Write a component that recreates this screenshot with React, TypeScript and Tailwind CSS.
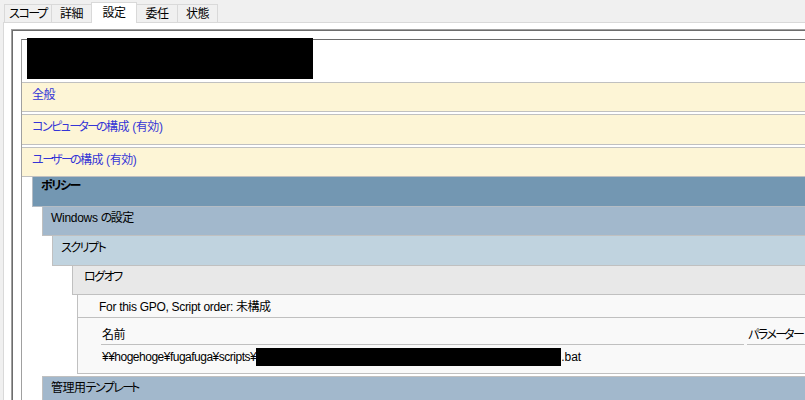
import React from "react";

const FONT = "font-['Liberation_Sans','Noto_Sans_CJK_JP',sans-serif] [font-feature-settings:'palt']";

function J({ t }: { t: string }) {
  const parts: { s: string; k: "dash" | "kana" | "kanji" | "latin" }[] = [];
  for (const ch of t) {
    let k: "dash" | "kana" | "kanji" | "latin";
    if (ch === "ー") k = "dash";
    else if (/[\u3040-\u30ff]/.test(ch)) k = "kana";
    else if (/[\u4e00-\u9fff]/.test(ch)) k = "kanji";
    else k = "latin";
    const last = parts[parts.length - 1];
    if (last && last.k === k) last.s += ch;
    else parts.push({ s: ch, k });
  }
  return (
    <>
      {parts.map((p, i) => {
        if (p.k === "dash")
          return (
            <span key={i} className="tracking-[-3px]">
              {p.s}
            </span>
          );
        if (p.k === "kana")
          return (
            <span key={i} className="tracking-[-1.5px]">
              {p.s}
            </span>
          );
        if (p.k === "kanji")
          return (
            <span key={i} className="tracking-[-0.5px]">
              {p.s}
            </span>
          );
        return (
          <span key={i} className="tracking-[-0.3px]">
            {p.s}
          </span>
        );
      })}
    </>
  );
}

function Tab({ label, w, selected }: { label: string; w: string; selected?: boolean }) {
  if (selected) {
    return (
      <div
        className={`${w} h-[21px] -mb-px relative z-10 bg-white border border-b-0 border-[#d9d9d9] flex items-start justify-center pt-[2px] leading-[16px] whitespace-nowrap`}
      >
        <J t={label} />
      </div>
    );
  }
  return (
    <div
      className={`${w} h-[18px] -ml-px bg-[#f0f0f0] border border-b-0 border-[#d9d9d9] flex items-start justify-center pt-[1px] leading-[16px] whitespace-nowrap`}
    >
      <J t={label} />
    </div>
  );
}

function Cream({ label, h, mt }: { label: string; h: string; mt?: string }) {
  return (
    <div
      className={`${h} ${mt ?? ""} border-y border-[#c0c0c0] bg-[#fdf5d6] pl-[10px] pt-[4px] leading-[16px] text-[#3535d6] whitespace-nowrap`}
    >
      <J t={label} />
    </div>
  );
}

export default function App() {
  return (
    <div className={`w-[805px] h-[400px] overflow-hidden bg-[#f0f0f0] text-[12px] text-black ${FONT}`}>
      {/* tabs */}
      <div className="flex items-end h-[22px] pl-[5px]">
        <Tab label="スコープ" w="w-[48px]" />
        <Tab label="詳細" w="w-[41px]" />
        <div className="-ml-px">
          <Tab label="設定" w="w-[46px]" selected />
        </div>
        <Tab label="委任" w="w-[42px]" />
        <Tab label="状態" w="w-[41px]" />
      </div>

      {/* panel */}
      <div className="ml-[3px] h-[378px] bg-white border-l border-t border-[#d9d9d9] pl-[7px] pt-[6px]">
        <div className="h-full border-l border-t border-[#a0a0a0]">
          <div className="h-full border-l border-t border-[#6d6d6d] pl-[8px] pt-[8px]">
            <div className="h-full border-l border-[#a0a0a0] border-t border-t-[#6b6b6b]">
              {/* header with redacted title */}
              <div className="flex h-[42px] bg-white">
                <div className="ml-[5px] -mt-[2px] w-[286px] h-[41px] bg-black" />
              </div>

              <Cream label="全般" h="h-[30px]" />
              <Cream label="コンピューターの構成 (有効)" h="h-[31px]" mt="mt-[2px]" />
              <Cream label="ユーザーの構成 (有効)" h="h-[30px]" mt="mt-[2px]" />

              {/* policy */}
              <div className="ml-[10px]">
                <div className="h-[30px] bg-[#7397b2] border-l border-b border-[#b4bcc4] pl-[8px] pt-[1px] leading-[16px] font-bold whitespace-nowrap">
                  <J t="ポリシー" />
                </div>
                <div className="ml-[10px]">
                  <div className="h-[29px] bg-[#a2b8cc] border-l border-b border-[#c0c0c0] pl-[8px] pt-[3px] leading-[16px] whitespace-nowrap">
                    <J t="Windows の設定" />
                  </div>
                  <div className="ml-[10px]">
                    <div className="h-[30px] bg-[#c0d3df] border-l border-b border-[#c0c0c0] pl-[8px] pt-[4px] leading-[16px] whitespace-nowrap">
                      <J t="スクリプト" />
                    </div>
                    <div className="ml-[20px]">
                      <div className="h-[29px] bg-[#e8e8e8] border-l border-b border-[#c0c0c0] pl-[11px] pt-[3px] leading-[16px] whitespace-nowrap">
                        <J t="ログオフ" />
                      </div>
                      <div className="ml-[5px] bg-[#f9f9f9] border-l border-b border-[#c0c0c0]">
                        <div className="h-[23px] border-b border-[#c0c0c0] pl-[21px] pt-[4px] leading-[16px] whitespace-nowrap">
                          <J t="For this GPO, Script order: 未構成" />
                        </div>
                        <div className="flex pl-[23px] gap-[3px]">
                          <div className="w-[643px] shrink-0 h-[27px] border-b border-[#c0c0c0] pl-[1px] pt-[9px] leading-[16px]">
                            <J t="名前" />
                          </div>
                          <div className="flex-1 h-[27px] border-b border-[#c0c0c0] pl-[1px] pt-[9px] leading-[16px] whitespace-nowrap">
                            <J t="パラメーター" />
                          </div>
                        </div>
                        <div className="h-[28px] pl-[24px] pt-[4px] leading-[16px] flex items-start whitespace-nowrap">
                          <span className="tracking-[-0.5px]">¥¥hogehoge¥fugafuga¥scripts¥</span>
                          <span className="inline-block w-[305px] h-[18px] bg-black -mt-[1px]" />
                          <span>.bat</span>
                        </div>
                      </div>
                    </div>
                  </div>
                  <div className="mt-[2px] h-[40px] bg-[#a2b8cc] border-l border-t border-[#c0c0c0] pl-[8px] pt-[3px] leading-[16px] whitespace-nowrap">
                    <J t="管理用テンプレート" />
                  </div>
                </div>
              </div>
            </div>
          </div>
        </div>
      </div>
    </div>
  );
}
